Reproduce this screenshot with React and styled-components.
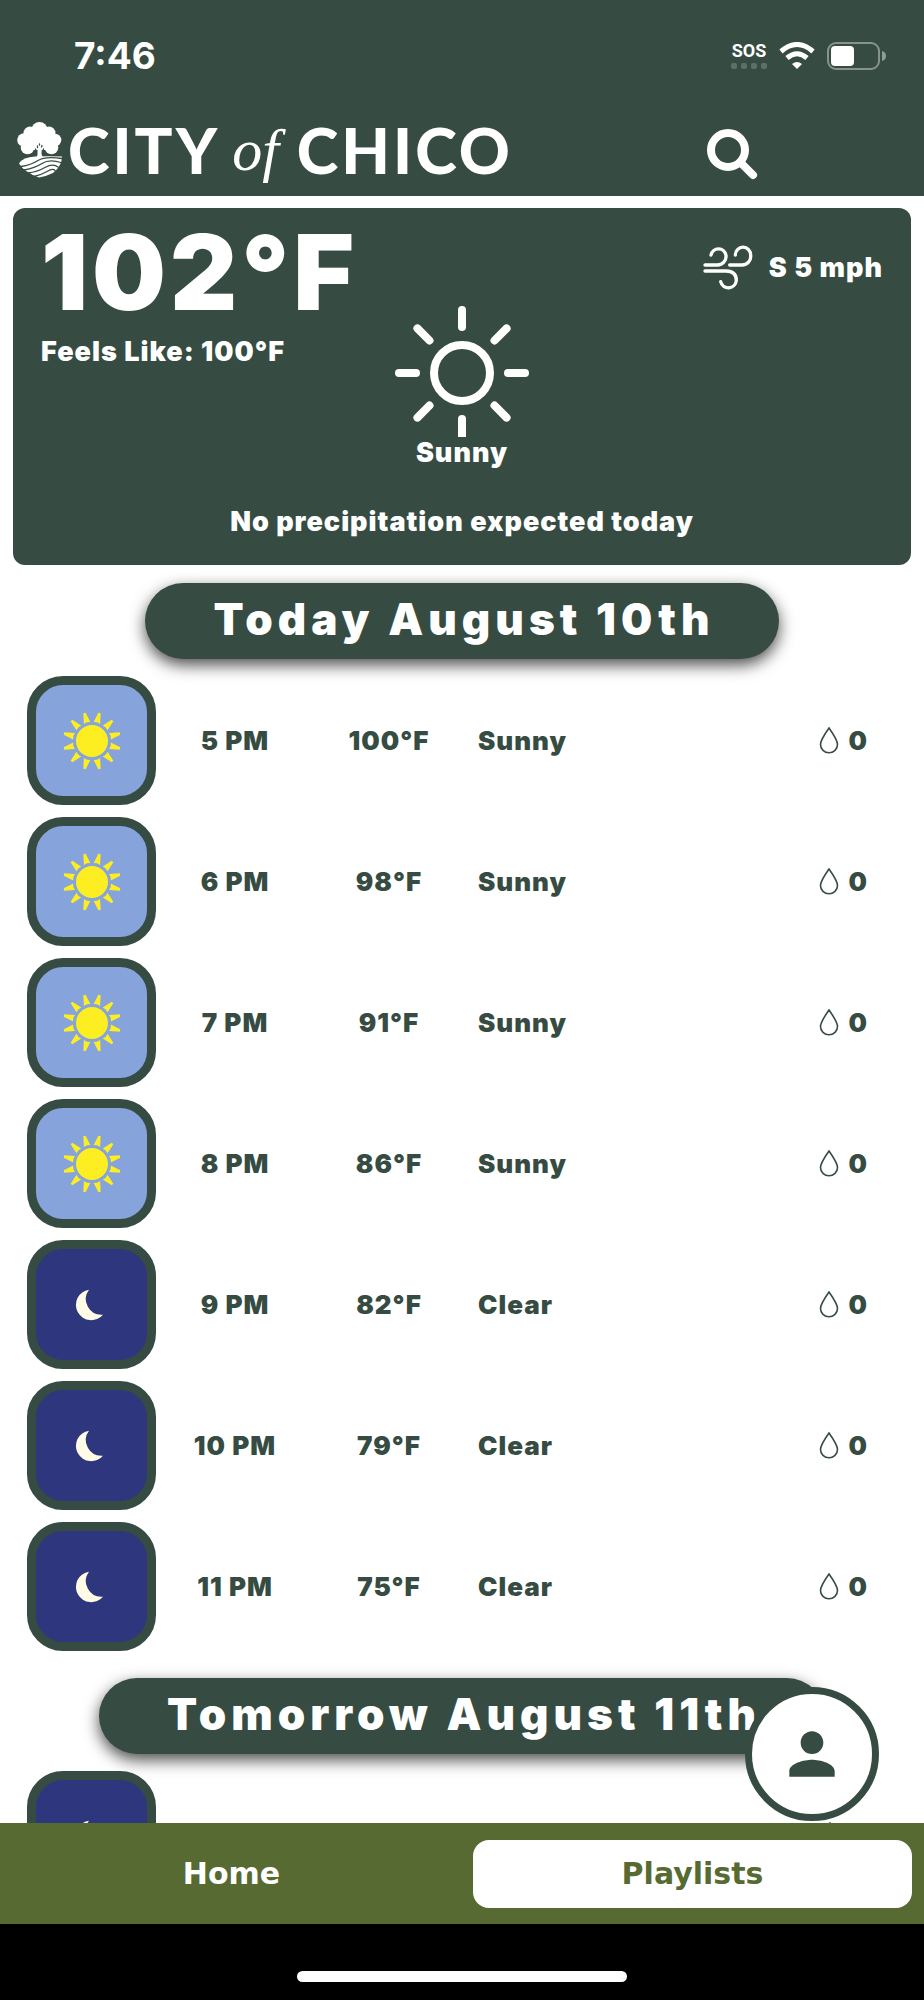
import React from 'react';
import styled, { createGlobalStyle } from 'styled-components';
import { MdPerson } from 'react-icons/md';

const colors = {
  pine: '#364c42',
  olive: '#576a32',
  day: '#86a3dc',
  night: '#2e367d',
  sun: '#fcee21',
  moon: '#fffbe6',
};

const GlobalStyle = createGlobalStyle`
  * {
    box-sizing: border-box;
  }

  body {
    margin: 0;
    background: #fff;
    color: ${colors.pine};
    font-family: Inter, 'Liberation Sans', sans-serif;
  }
`;

const Page = styled.div`
  display: flex;
  flex-direction: column;
  height: 100vh;
`;

const Header = styled.header`
  flex: none;
  background: ${colors.pine};
  color: #fff;
`;

const StatusBar = styled.div`
  display: flex;
  justify-content: space-between;
  align-items: center;
  height: 111px;
  padding: 0 37px 0 74px;
`;

const Clock = styled.time`
  font-size: 37px;
  line-height: 40px;
  font-weight: 700;
`;

const StatusIcons = styled.div`
  display: flex;
  align-items: center;
  gap: 12px;
`;

const Signal = styled.div`
  display: flex;
  flex-direction: column;
  align-items: center;
  gap: 3px;
  font-family: Roboto, sans-serif;
  font-size: 18px;
  line-height: 18px;
  font-weight: 700;
`;

const Dots = styled.div`
  display: flex;
  gap: 4px;

  i {
    width: 6px;
    height: 6px;
    border-radius: 2px;
    background: rgba(255, 255, 255, 0.2);
  }
`;

const Brand = styled.div`
  display: flex;
  align-items: center;
  justify-content: space-between;
  height: 85px;
  padding: 0 166px 0 16px;
`;

const Logo = styled.a`
  display: flex;
  align-items: center;
  padding-bottom: 8px;
  color: #fff;
  text-decoration: none;
  font-family: Lato, sans-serif;
  font-size: 63px;
  line-height: 72px;
  font-weight: 900;
  letter-spacing: 3px;

  svg {
    margin-right: 4px;
  }

  em {
    margin: 0 18px 0 12px;
    font-family: 'Liberation Serif', serif;
    font-weight: 400;
    font-size: 60px;
    letter-spacing: 0;
  }
`;

const IconButton = styled.button`
  display: flex;
  padding: 0;
  border: 0;
  background: none;
  color: inherit;
  cursor: pointer;
`;

const Content = styled.main`
  flex: 1;
  min-height: 0;
  overflow: hidden;
  padding-top: 12px;
`;

const Current = styled.section`
  display: flex;
  flex-direction: column;
  align-items: center;
  height: 357px;
  margin: 0 13px 18px;
  padding: 0 28px;
  border-radius: 12px;
  background: ${colors.pine};
  color: #fff;
  font-size: 27px;
  line-height: 32px;
  font-weight: 900;
  letter-spacing: 1px;
`;

const CurrentTop = styled.div`
  display: flex;
  justify-content: space-between;
  width: 100%;
  height: 97px;
`;

const Temperature = styled.div`
  font-size: 104px;
  line-height: 128px;
  letter-spacing: 4px;
  white-space: nowrap;

  p {
    margin: 0;
    font-size: 27px;
    line-height: 32px;
    letter-spacing: 1px;
  }
`;

const Wind = styled.div`
  display: flex;
  align-items: center;
  gap: 16px;
  height: 120px;
`;

const Sky = styled.div`
  display: flex;
  flex-direction: column;
  align-items: center;
`;

const Outlook = styled.p`
  margin: 37px 0 0;
`;

const DayTitle = styled.h2`
  width: fit-content;
  height: 76px;
  margin: 0 auto 17px;
  padding: 0 64px 0 68px;
  border-radius: 40px;
  background: ${colors.pine};
  box-shadow: 0 6px 16px rgba(0, 0, 0, 0.7);
  color: #fff;
  font-size: 44px;
  line-height: 72px;
  font-weight: 900;
  letter-spacing: 5px;
  white-space: nowrap;
`;

const Hours = styled.ul`
  display: flex;
  flex-direction: column;
  gap: 12px;
  margin: 0 0 27px;
  padding: 0 56px 0 27px;
  list-style: none;
`;

const Hour = styled.li`
  display: grid;
  grid-template-columns: 129px 158px 150px 1fr auto;
  align-items: center;
  height: 129px;
  font-size: 26px;
  line-height: 32px;
  font-weight: 900;
  letter-spacing: 1px;
`;

const Tile = styled.div`
  display: flex;
  align-items: center;
  justify-content: center;
  height: 129px;
  border: 9px solid ${colors.pine};
  border-radius: 36px;
  background: ${({ $night }) => ($night ? colors.night : colors.day)};
`;

const Cell = styled.span`
  text-align: center;
`;

const Condition = styled.span`
  padding-left: 14px;
`;

const Rain = styled.span`
  display: flex;
  align-items: center;
  gap: 10px;
  min-width: 48px;
`;

const Footer = styled.footer`
  position: relative;
  flex: none;
  background: #000;
`;

const ProfileButton = styled.button`
  position: absolute;
  right: 45px;
  bottom: calc(100% + 2px);
  display: flex;
  align-items: center;
  justify-content: center;
  width: 134px;
  height: 134px;
  padding: 0;
  border: 7px solid ${colors.pine};
  border-radius: 50%;
  background: #fff;
  color: ${colors.pine};
  cursor: pointer;
`;

const Tabs = styled.nav`
  display: grid;
  grid-template-columns: 1fr 1fr;
  gap: 22px;
  height: 101px;
  padding: 17px 12px 16px;
  background: ${colors.olive};
`;

const Tab = styled.a`
  display: flex;
  align-items: center;
  justify-content: center;
  border-radius: 16px;
  background: ${({ $active }) => ($active ? '#fff' : 'transparent')};
  color: ${({ $active }) => ($active ? colors.olive : '#fff')};
  font-family: 'DejaVu Sans', sans-serif;
  font-size: 30px;
  line-height: 36px;
  font-weight: 700;
  text-decoration: none;
`;

const HomeIndicator = styled.div`
  display: flex;
  justify-content: center;
  height: 76px;
  padding-top: 47px;

  &::before {
    content: '';
    width: 330px;
    height: 11px;
    border-radius: 6px;
    background: #fff;
  }
`;

const TreeIcon = () => (
  <svg width="48" height="58" viewBox="7 8 48 58" aria-hidden="true">
    <g fill="#fff">
      <circle cx="30.5" cy="17" r="8" />
      <circle cx="21" cy="20" r="6.5" />
      <circle cx="40" cy="20" r="6.5" />
      <circle cx="15" cy="27" r="6.8" />
      <circle cx="46" cy="27" r="6.3" />
      <circle cx="18.5" cy="34.5" r="6.8" />
      <circle cx="42.5" cy="34.5" r="6.8" />
      <path d="M18 20h26v14l-7 3h-13l-7-3z" />
      <path d="M28.5 34h4.5l-.5 7 1.5 4h-7l1.5-3z" />
      <path d="M10 50.5Q14 44 26 43.5Q40 43 53 43.5Q53 53 44 60Q38 63 30 64.5Q15 59 10 50.5z" />
    </g>
    <g fill="none" stroke={colors.pine} strokeWidth="1.3" strokeLinecap="round">
      <path d="M12 53.5Q22 52 29 47.5T53 45.5" />
      <path d="M15 57Q26 55 33 50.5T52 49.5" />
      <path d="M19 60Q28 59 36 54.5T49 54" />
      <path d="M25 63.5Q32 62 38 58.5T46 57.5" />
      <path d="M26.5 36l1 3M30.5 31v1M33 32.5l-.5 1.5M28.5 33v1.5M34.5 36l-1 3" />
    </g>
  </svg>
);

const WifiIcon = () => (
  <svg width="36" height="27" viewBox="0 0 36 27" fill="none" stroke="#fff" strokeWidth="5" aria-hidden="true">
    <path d="M2 9.5Q18 -4.5 34 9.5" />
    <path d="M8 16Q18 7.5 28 16" />
    <path d="M18 27l-5-5q5-4 10 0z" fill="#fff" stroke="none" />
  </svg>
);

const BatteryIcon = () => (
  <svg width="60" height="28" viewBox="0 0 60 28" aria-hidden="true">
    <rect x="1" y="1" width="51" height="26" rx="8" fill="none" stroke="#fff" strokeOpacity="0.4" strokeWidth="2" />
    <rect x="4" y="4" width="23" height="20" rx="4" fill="#fff" />
    <path d="M55 9q4 1 4 5t-4 5z" fill="#fff" fillOpacity="0.45" />
  </svg>
);

const SearchIcon = () => (
  <svg width="52" height="52" viewBox="0 0 52 52" fill="none" stroke="#fff" aria-hidden="true">
    <circle cx="22" cy="22" r="17" strokeWidth="8" />
    <path d="M35 35l12 12" strokeWidth="8" strokeLinecap="round" />
  </svg>
);

const WindIcon = () => (
  <svg width="50" height="46" viewBox="311 736 150 138" fill="none" stroke="#fff" strokeWidth="10" strokeLinecap="round" aria-hidden="true">
    <path d="M317 796H354A26 26 0 0 0 380 767A23 24 0 0 0 335 766" />
    <path d="M391 796H428A26 26 0 0 0 454 767A23 24 0 0 0 408 766" />
    <path d="M317 814H380Q411 815 411 842A24 25 0 0 1 364 846" />
  </svg>
);

const SunnyIcon = () => (
  <svg width="136" height="132" viewBox="-68 -68 136 132" fill="none" stroke="#fff" strokeWidth="8" strokeLinecap="round" aria-hidden="true">
    <circle r="28" />
    {[0, 45, 90, 135, 180, 225, 270, 315].map((angle) => (
      <path key={angle} d="M0 -46V-63" transform={`rotate(${angle})`} />
    ))}
  </svg>
);

const SunTileIcon = () => (
  <svg width="60" height="60" viewBox="-30 -30 60 60" fill={colors.sun} aria-hidden="true">
    <circle r="16" />
    {[...Array(12).keys()].map((i) => (
      <path key={i} d="M-3.4 -18.6Q0 -20 3.4 -18.6L1.2 -29H-1.2z" transform={`rotate(${15 + i * 30})`} />
    ))}
  </svg>
);

const MoonTileIcon = () => (
  <svg width="60" height="60" viewBox="126 131 180 180" fill={colors.moon} aria-hidden="true">
    <path d="M207 175A46 46 0 1 0 249 250A47 47 0 0 1 207 175z" />
  </svg>
);

const DropIcon = () => (
  <svg width="20" height="28" viewBox="0 0 20 28" fill="none" stroke={colors.pine} strokeWidth="1.6" aria-hidden="true">
    <path d="M10 1Q1.5 13 1.5 17.5A8.5 8.3 0 0 0 18.5 17.5Q18.5 13 10 1z" />
  </svg>
);

const today = [
  { time: '5 PM', temp: '100°F', condition: 'Sunny', rain: 0 },
  { time: '6 PM', temp: '98°F', condition: 'Sunny', rain: 0 },
  { time: '7 PM', temp: '91°F', condition: 'Sunny', rain: 0 },
  { time: '8 PM', temp: '86°F', condition: 'Sunny', rain: 0 },
  { time: '9 PM', temp: '82°F', condition: 'Clear', rain: 0, night: true },
  { time: '10 PM', temp: '79°F', condition: 'Clear', rain: 0, night: true },
  { time: '11 PM', temp: '75°F', condition: 'Clear', rain: 0, night: true },
];

const tomorrow = [{ time: '', temp: '', condition: '', night: true }];

const HourRow = ({ hour }) => (
  <Hour>
    <Tile $night={hour.night}>{hour.night ? <MoonTileIcon /> : <SunTileIcon />}</Tile>
    <Cell>{hour.time}</Cell>
    <Cell>{hour.temp}</Cell>
    <Condition>{hour.condition}</Condition>
    <Rain>
      <DropIcon />
      {hour.rain}
    </Rain>
  </Hour>
);

function App() {
  return (
    <Page>
      <GlobalStyle />
      <Header>
        <StatusBar>
          <Clock>7:46</Clock>
          <StatusIcons>
            <Signal>
              SOS
              <Dots>
                <i />
                <i />
                <i />
                <i />
              </Dots>
            </Signal>
            <WifiIcon />
            <BatteryIcon />
          </StatusIcons>
        </StatusBar>
        <Brand>
          <Logo href="#home">
            <TreeIcon />
            CITY
            <em>of</em>
            CHICO
          </Logo>
          <IconButton type="button" aria-label="Search">
            <SearchIcon />
          </IconButton>
        </Brand>
      </Header>

      <Content>
        <Current>
          <CurrentTop>
            <Temperature>
              102°F
              <p>Feels Like: 100°F</p>
            </Temperature>
            <Wind>
              <WindIcon />
              S 5 mph
            </Wind>
          </CurrentTop>
          <Sky>
            <SunnyIcon />
            Sunny
          </Sky>
          <Outlook>No precipitation expected today</Outlook>
        </Current>

        <DayTitle>Today August 10th</DayTitle>
        <Hours>
          {today.map((hour) => (
            <HourRow key={hour.time} hour={hour} />
          ))}
        </Hours>

        <DayTitle>Tomorrow August 11th</DayTitle>
        <Hours>
          {tomorrow.map((hour) => (
            <HourRow key={hour.time} hour={hour} />
          ))}
        </Hours>
      </Content>

      <Footer>
        <ProfileButton type="button" aria-label="Profile">
          <MdPerson size={68} />
        </ProfileButton>
        <Tabs>
          <Tab href="#home">Home</Tab>
          <Tab href="#playlists" $active>
            Playlists
          </Tab>
        </Tabs>
        <HomeIndicator />
      </Footer>
    </Page>
  );
}

export default App;
